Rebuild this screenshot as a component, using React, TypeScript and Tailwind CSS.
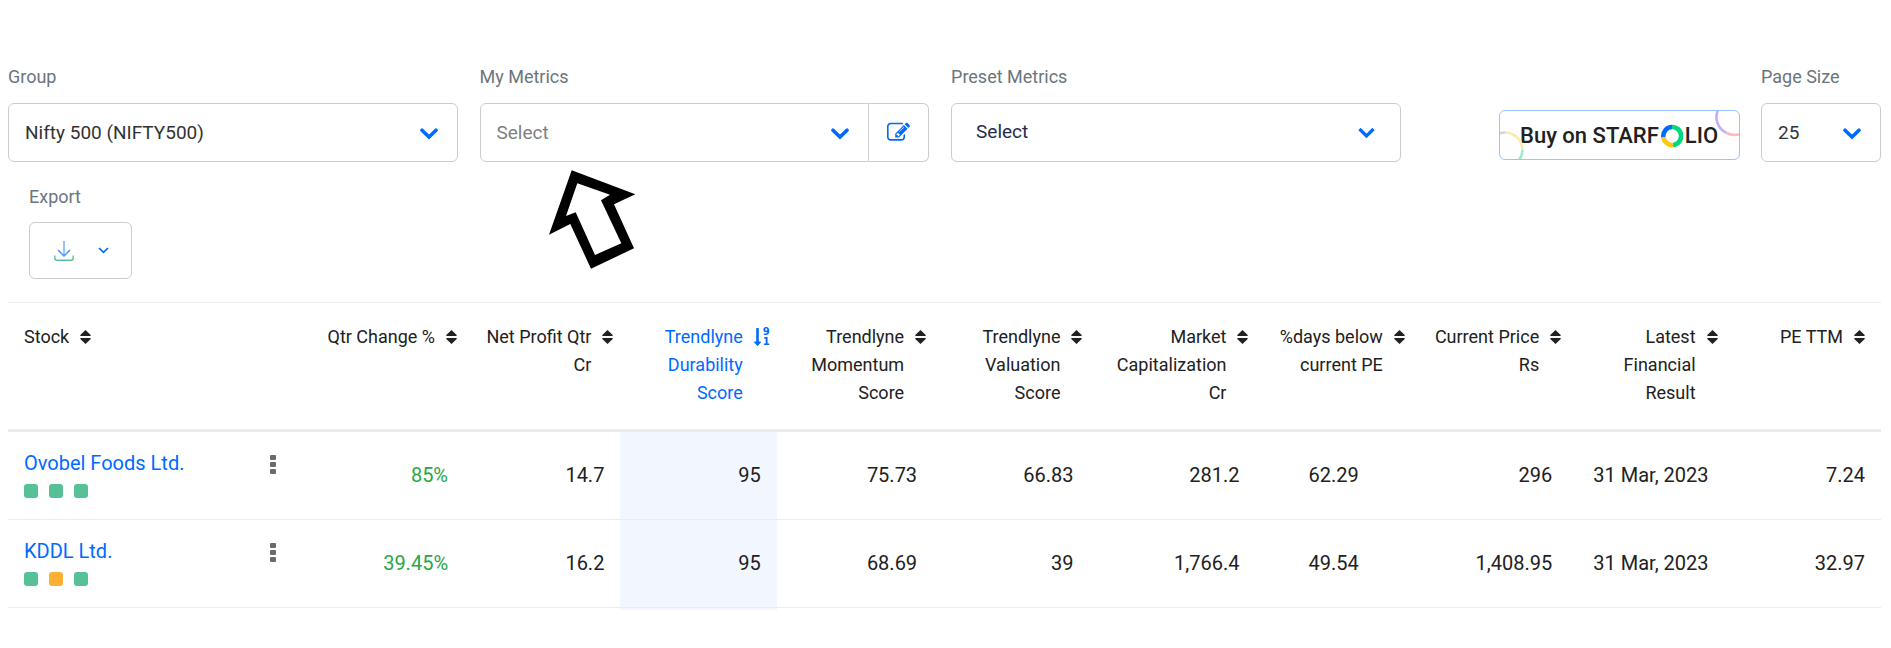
import React from "react";

const columns = [
    { lines: ["Qtr Change %"] },
    { lines: ["Net Profit Qtr", "Cr"] },
    { lines: ["Trendlyne", "Durability", "Score"], active: true },
    { lines: ["Trendlyne", "Momentum", "Score"] },
    { lines: ["Trendlyne", "Valuation", "Score"] },
    { lines: ["Market", "Capitalization", "Cr"], wide: true },
    { lines: ["%days below", "current PE"] },
    { lines: ["Current Price", "Rs"] },
    { lines: ["Latest", "Financial", "Result"] },
    { lines: ["PE TTM"] },
];

const stocks = [
    {
        name: "Ovobel Foods Ltd.",
        marks: ["bg-[#56c096]", "bg-[#56c096]", "bg-[#56c096]"],
        values: ["85%", "14.7", "95", "75.73", "66.83", "281.2", "62.29", "296", "31 Mar, 2023", "7.24"],
    },
    {
        name: "KDDL Ltd.",
        marks: ["bg-[#56c096]", "bg-[#fbb034]", "bg-[#56c096]"],
        values: ["39.45%", "16.2", "95", "68.69", "39", "1,766.4", "49.54", "1,408.95", "31 Mar, 2023", "32.97"],
    },
];

const Chevron = ({ className = "" }: { className?: string }) => (
    <svg className={`pointer-events-none absolute ${className}`} width="18" height="12" viewBox="0 0 18 12" fill="none" aria-hidden="true">
        <path d="M2 2.2L9 9L16 2.2" stroke="#006aff" strokeWidth="3.6" strokeLinecap="round" />
    </svg>
);

const SortIcon = () => (
    <svg width="11" height="14" viewBox="0 0 11 14" fill="#212121" aria-hidden="true">
        <path d="M5.5 0L10.7 5Q11 5.9 10.2 5.9H.8Q0 5.9 .3 5Z" />
        <path d="M5.5 14L10.7 9Q11 8.1 10.2 8.1H.8Q0 8.1 .3 9Z" />
    </svg>
);

const SortDescIcon = () => (
    <span className="flex items-center gap-[2px]" aria-hidden="true">
        <svg width="7" height="18" viewBox="0 0 7 18" fill="#006aff">
            <path d="M2.2 .5Q2.2 0 2.7 0H4.3Q4.8 0 4.8 .5V13.5H6.4Q7.3 13.7 6.8 14.6L3.9 17.8Q3.5 18.2 3.1 17.8L.2 14.6Q-.3 13.7 .6 13.5H2.2Z" />
        </svg>
        <span className="flex flex-col font-['DejaVu_Sans',sans-serif] text-[10px] leading-[10px] font-bold">
            <span>9</span>
            <span>1</span>
        </span>
    </span>
);

const EditIcon = () => (
    <svg width="23" height="23" viewBox="0 0 1792 1792" fill="#006aff" aria-hidden="true">
        <path d="M888 1184l116-116-152-152-116 116v56h96v96h56zm440-720q-16-16-33 1l-350 350q-17 17-1 33t33-1l350-350q17-17 1-33zm80 594v190q0 119-84.5 203.5t-203.5 84.5h-832q-119 0-203.5-84.5t-84.5-203.5v-832q0-119 84.5-203.5t203.5-84.5h832q63 0 117 25 15 7 18 23 3 17-9 29l-49 49q-14 14-32 8-23-6-45-6h-832q-66 0-113 47t-47 113v832q0 66 47 113t113 47h832q66 0 113-47t47-113v-126q0-13 9-22l64-64q15-15 35-7t20 29zm-96-738l288 288-672 672h-288v-288zm444 132l-92 92-288-288 92-92q28-28 68-28t68 28l152 152q28 28 28 68t-28 68z" />
    </svg>
);

const StarfolioButton = () => (
    <button type="button" className="relative flex h-[50px] w-[241px] items-center overflow-hidden rounded-md border border-[#99c3ff] pt-px pl-5 text-[22px] font-medium text-[#212121]">
        <svg className="absolute bottom-0 left-0" width="26" height="30" viewBox="0 0 26 30" fill="none" strokeWidth="2.6" aria-hidden="true">
            <path d="M-3 5.4A17.5 17.5 0 0 1 5 3.5" stroke="#cfd8c8" />
            <path d="M5 3.5A17.5 17.5 0 0 1 22.5 21" stroke="#fde9a8" />
            <path d="M22.5 21A17.5 17.5 0 0 1 19 31" stroke="#99eec8" />
        </svg>
        <svg className="absolute right-0 top-0" width="26" height="28" viewBox="0 0 26 28" fill="none" strokeWidth="2.6" aria-hidden="true">
            <path d="M5.5 -2A17.5 17.5 0 0 0 13.5 22" stroke="#c6adf7" />
            <path d="M13.5 22A17.5 17.5 0 0 0 27 23" stroke="#ffb9bd" />
        </svg>
        <span>Buy on STARF</span>
        <svg className="mx-[2px]" width="22" height="24" viewBox="0 0 22 24" fill="none" strokeWidth="4.6" aria-hidden="true">
            <path d="M11 3A8.6 9 0 0 1 12 21" stroke="#00d97e" />
            <path d="M12 21A8.6 9 0 0 1 2.4 13" stroke="#fdc816" />
            <path d="M2.4 13A8.6 9 0 0 1 11 3" stroke="#006aff" />
        </svg>
        <span>LIO</span>
    </button>
);

const App = () => {
    return (
        <div className="w-full bg-white pt-[63px] pr-[10px] pb-9 pl-2 font-[Roboto,sans-serif] text-[#212121]">
            <div className="flex items-end gap-[22px]">
                <div className="flex w-[24%] flex-col gap-3">
                    <label htmlFor="group" className="text-lg text-[#6c757d]">Group</label>
                    <div className="relative">
                        <select id="group" className="h-[59px] w-full appearance-none rounded-md border border-[#ccc] bg-white px-4 pt-px text-[19px] text-[#333]">
                            <option>Nifty 500 (NIFTY500)</option>
                        </select>
                        <Chevron className="right-5 top-[25px]" />
                    </div>
                </div>

                <div className="relative flex w-[24%] flex-col gap-3">
                    <label htmlFor="my-metrics" className="text-lg text-[#6c757d]">My Metrics</label>
                    <div className="flex">
                        <div className="relative flex-1">
                            <select id="my-metrics" className="h-[59px] w-full appearance-none rounded-l-md border border-[#ccc] bg-white px-4 pt-px text-[19px] text-[#808080]">
                                <option>Select</option>
                            </select>
                            <Chevron className="right-5 top-[25px]" />
                        </div>
                        <button type="button" aria-label="Edit metrics" className="flex h-[59px] w-[60px] items-center justify-center rounded-r-md border border-l-0 border-[#ccc]">
                            <EditIcon />
                        </button>
                    </div>
                    <svg className="absolute left-[69px] top-full mt-2" width="87" height="99" viewBox="0 0 87 99" aria-hidden="true">
                        <path fillRule="evenodd" d="M22.7 .3L86.3 24.3L65 34.3L85 78.3L42 98.7L21.3 54L0 64.7ZM28.3 13.3L61 24.7L52 30.3L72.3 73.3L46 85L26.7 42.3L17 46Z" />
                    </svg>
                </div>

                <div className="flex w-[24%] flex-col gap-3">
                    <label htmlFor="preset-metrics" className="text-lg text-[#6c757d]">Preset Metrics</label>
                    <div className="relative">
                        <select id="preset-metrics" className="h-[59px] w-full appearance-none rounded-md border border-[#ccc] bg-white px-6 text-[19px] text-[#1f2d4d]">
                            <option>Select</option>
                        </select>
                        <svg className="pointer-events-none absolute right-[26px] top-6" width="17" height="12" viewBox="0 0 17 12" fill="none" aria-hidden="true">
                            <path d="M1.5 2L8.5 9L15.5 2" stroke="#006aff" strokeWidth="3.2" />
                        </svg>
                    </div>
                </div>

                <div className="ml-auto flex items-end gap-[21px]">
                    <div className="pb-[2px]">
                        <StarfolioButton />
                    </div>
                    <div className="flex w-[120px] flex-col gap-3">
                        <label htmlFor="page-size" className="text-lg text-[#6c757d]">Page Size</label>
                        <div className="relative">
                            <select id="page-size" className="h-[59px] w-full appearance-none rounded-md border border-[#ccc] bg-white px-4 pt-px text-[19px] text-[#333]">
                                <option>25</option>
                            </select>
                            <Chevron className="right-5 top-[25px]" />
                        </div>
                    </div>
                </div>
            </div>

            <div className="mt-[21px] ml-[21px] flex flex-col items-start gap-[11px]">
                <span id="export-label" className="text-lg text-[#6c757d]">Export</span>
                <button type="button" aria-labelledby="export-label" className="flex h-[57px] w-[103px] items-center gap-6 rounded-md border border-[#ccc] pl-6">
                    <svg width="20" height="20" viewBox="0 0 20 20" fill="none" aria-hidden="true">
                        <path d="M10 0V15" stroke="#7db3ff" strokeWidth="1.6" />
                        <path d="M4 9L10 15L16 9" stroke="#4a94ff" strokeWidth="1.5" />
                        <path d="M.8 14.5V17Q.8 19.3 3 19.3H17Q19.2 19.3 19.2 17V14.5" stroke="#56c096" strokeWidth="1.4" />
                    </svg>
                    <svg width="11" height="7" viewBox="0 0 11 7" fill="none" aria-hidden="true">
                        <path d="M1 1L5.5 5.4L10 1" stroke="#006aff" strokeWidth="1.7" />
                    </svg>
                </button>
            </div>

            <table className="mt-[23px] w-full table-fixed border-separate border-spacing-0 border-t border-[#ececec] text-right">
                <colgroup>
                    <col className="w-[16%]" />
                    {columns.map((col, i) => (
                        <col key={i} className={col.wide ? "w-[166px]" : ""} />
                    ))}
                </colgroup>
                <thead>
                    <tr className="text-lg leading-7">
                        <th scope="col" className="h-[129px] border-b-3 border-[#ececec] pt-5 pl-4 text-left align-top font-normal">
                            <button type="button" className="flex items-center gap-[11px]">
                                Stock <SortIcon />
                            </button>
                        </th>
                        {columns.map((col, i) => (
                            <th key={i} scope="col" className="border-b-3 border-[#ececec] pt-5 pr-[7px] align-top font-normal last:pr-4">
                                <button type="button" className={`ml-auto flex items-start gap-[11px] text-right whitespace-nowrap ${col.active ? "text-[#006aff]" : ""}`}>
                                    <span>
                                        {col.lines.map((line) => (
                                            <span key={line} className="block">{line}</span>
                                        ))}
                                    </span>
                                    <span className="flex h-7 items-center">
                                        {col.active ? <SortDescIcon /> : <SortIcon />}
                                    </span>
                                </button>
                            </th>
                        ))}
                    </tr>
                </thead>
                <tbody>
                    {stocks.map((stock) => (
                        <tr key={stock.name} className="text-xl">
                            <td className="h-[88px] border-b border-[#ececec] pb-1 pl-4">
                                <div className="flex items-start justify-between pr-8">
                                    <div className="flex flex-col gap-[7px]">
                                        <a href="#" className="text-left text-[#006aff]">{stock.name}</a>
                                        <div className="flex gap-[11px]">
                                            {stock.marks.map((mark, i) => (
                                                <span key={i} className={`h-[14px] w-[14px] rounded-[3px] ${mark}`}></span>
                                            ))}
                                        </div>
                                    </div>
                                    <button type="button" aria-label={`${stock.name} menu`} className="flex flex-col gap-[2px] pt-[6px]">
                                        <span className="h-[5px] w-[6px] rounded-[1px] bg-[#6b6b6b]"></span>
                                        <span className="h-[5px] w-[6px] rounded-[1px] bg-[#6b6b6b]"></span>
                                        <span className="h-[5px] w-[6px] rounded-[1px] bg-[#6b6b6b]"></span>
                                    </button>
                                </div>
                            </td>
                            {stock.values.map((value, i) => (
                                <td key={i} className={`border-b border-[#ececec] px-4 pb-[2px] whitespace-nowrap ${i === 0 ? "text-[#28a745]" : ""} ${i === 2 ? "bg-[#f2f7ff]" : ""} ${i === 6 ? "text-center" : ""}`}>
                                    {value}
                                </td>
                            ))}
                        </tr>
                    ))}
                </tbody>
                {/* sorted column tint runs slightly past the last row */}
                <tfoot aria-hidden="true">
                    <tr>
                        <td colSpan={3}></td>
                        <td className="h-[2px] bg-[#f2f7ff] p-0"></td>
                        <td colSpan={7}></td>
                    </tr>
                </tfoot>
            </table>
        </div>
    );
};

export default App;
